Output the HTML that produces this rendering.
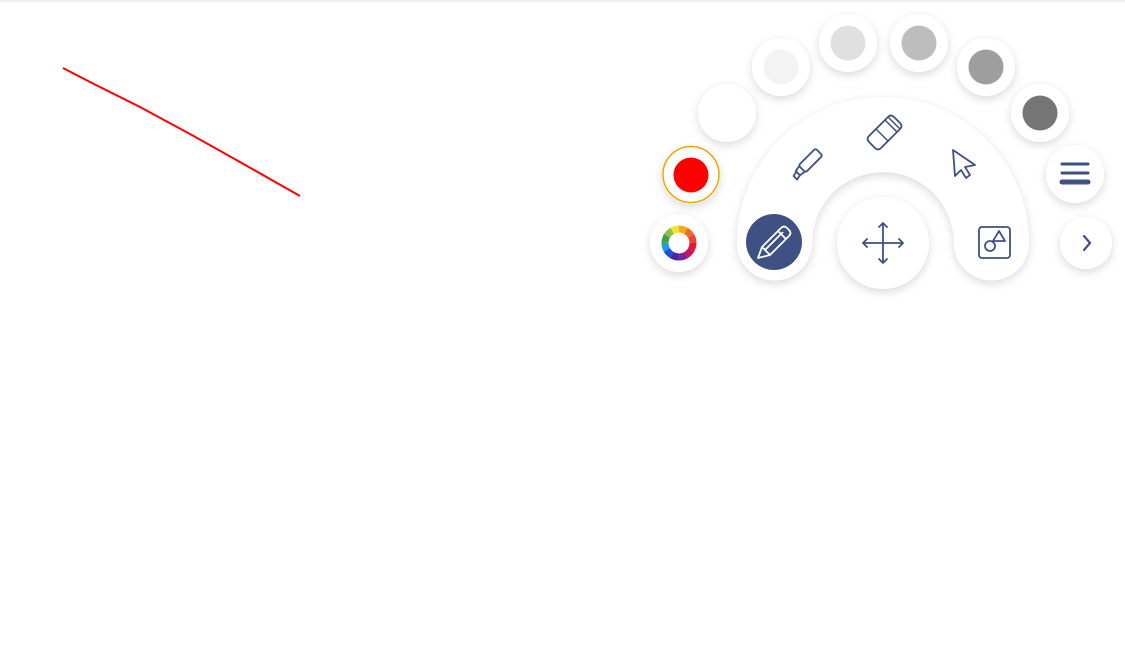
<!DOCTYPE html>
<html><head><style>
html,body{margin:0;padding:0;background:#fff;width:1125px;height:666px;overflow:hidden}
</style></head><body>
<svg width="1125" height="666" viewBox="0 0 1125 666" xmlns="http://www.w3.org/2000/svg">
<defs>
<filter id="sh" x="-50%" y="-50%" width="200%" height="200%">
<feDropShadow dx="0" dy="3" stdDeviation="4.5" flood-color="#000" flood-opacity="0.15"/>
</filter>
</defs>
<rect x="0" y="0" width="1125" height="2" fill="#efefef"/>
<polyline points="63,68 90,82 140,107 190,134 240,162 300,196" fill="none" stroke="#ff0000" stroke-width="2"/>

<path d="M737,243 A146,146 0 0 1 1029,243 A37.5,37.5 0 0 1 954,243 A71,71 0 0 0 812,243 A37.5,37.5 0 0 1 737,243 Z" fill="#fff" filter="url(#sh)"/>
<circle cx="883" cy="243" r="46" fill="#fff" filter="url(#sh)"/>

<g filter="url(#sh)" fill="#fff">
<circle cx="679" cy="243" r="29"/>
<circle cx="691" cy="175" r="29"/>
<circle cx="727" cy="113" r="29"/>
<circle cx="781" cy="67" r="29"/>
<circle cx="848" cy="43" r="29"/>
<circle cx="919" cy="43" r="29"/>
<circle cx="986" cy="67" r="29"/>
<circle cx="1040" cy="113" r="29"/>
<circle cx="1075" cy="174" r="29"/>
<circle cx="1086" cy="243" r="26"/>
</g>
<circle cx="691" cy="174.5" r="28" fill="none" stroke="#f0a500" stroke-width="1.5"/>
<circle cx="691" cy="175" r="17.5" fill="#ff0000"/>
<circle cx="781" cy="67" r="17.5" fill="#f3f3f3"/>
<circle cx="848" cy="43" r="17.5" fill="#e0e0e0"/>
<circle cx="919" cy="43" r="17.5" fill="#bdbdbd"/>
<circle cx="986" cy="67" r="17.5" fill="#9e9e9e"/>
<circle cx="1040" cy="113" r="17.5" fill="#757575"/>

<g transform="rotate(-90 679 243)" fill="none" stroke-width="7">
<circle cx="679" cy="243" r="14" stroke="#f5a623" stroke-dasharray="7.4 80.6" stroke-dashoffset="0"/>
<circle cx="679" cy="243" r="14" stroke="#f26b21" stroke-dasharray="7.4 80.6" stroke-dashoffset="-7.33"/>
<circle cx="679" cy="243" r="14" stroke="#ee4035" stroke-dasharray="7.4 80.6" stroke-dashoffset="-14.66"/>
<circle cx="679" cy="243" r="14" stroke="#e4183c" stroke-dasharray="7.4 80.6" stroke-dashoffset="-21.99"/>
<circle cx="679" cy="243" r="14" stroke="#c2185b" stroke-dasharray="7.4 80.6" stroke-dashoffset="-29.32"/>
<circle cx="679" cy="243" r="14" stroke="#7b1fa2" stroke-dasharray="7.4 80.6" stroke-dashoffset="-36.65"/>
<circle cx="679" cy="243" r="14" stroke="#4527a0" stroke-dasharray="7.4 80.6" stroke-dashoffset="-43.98"/>
<circle cx="679" cy="243" r="14" stroke="#1e4fd8" stroke-dasharray="7.4 80.6" stroke-dashoffset="-51.31"/>
<circle cx="679" cy="243" r="14" stroke="#1e9be9" stroke-dasharray="7.4 80.6" stroke-dashoffset="-58.64"/>
<circle cx="679" cy="243" r="14" stroke="#43a047" stroke-dasharray="7.4 80.6" stroke-dashoffset="-65.97"/>
<circle cx="679" cy="243" r="14" stroke="#8bc34a" stroke-dasharray="7.4 80.6" stroke-dashoffset="-73.3"/>
<circle cx="679" cy="243" r="14" stroke="#f5e12a" stroke-dasharray="7.4 80.6" stroke-dashoffset="-80.63"/>
</g>

<circle cx="774" cy="242" r="28" fill="#3f5183"/>
<g fill="none" stroke="#fff" stroke-width="1.8" stroke-linejoin="round">
<path d="M758,258 L762,247 L781,228 Q784,225 787,228 L789,230 Q792,233 789,236 L770,255 Z"/>
<path d="M778,231 L786,239 M762,247 L770,255 M765,250 L783,232"/>
</g>

<g fill="none" stroke="#3f5183" stroke-width="1.8" stroke-linejoin="round" stroke-linecap="round">
<!-- highlighter -->
<g transform="rotate(-45 807 164)">
<rect x="800" y="159" width="24" height="10" rx="2"/>
<path d="M800,160 L794,161 L794,167 L800,168"/>
<path d="M794,162 L789,163 L789,168 L794,167"/>
</g>
<!-- eraser -->
<path d="M869,136 L888,117 Q891,114 894,117 L900,123 Q903,126 900,129 L881,148 Q878,151 875,148 L869,142 Q866,139 869,136 Z"/>
<path d="M876,129 L888,141 M885,120 L897,132 M889,118 L899,128" stroke-width="1.5"/>
<!-- cursor -->
<path d="M953,150 L975,165 L965,167 L970,175 L966,178 L961,170 L955,176 Z"/>
<!-- move -->
<path d="M883,223 L883,263 M863,243 L903,243 M879,227 L883,223 L887,227 M879,259 L883,263 L887,259 M867,239 L863,243 L867,247 M899,239 L903,243 L899,247"/>
<!-- shapes -->
<rect x="979" y="227" width="31" height="31" rx="3"/>
<circle cx="990" cy="246" r="5"/>
<path d="M993,241 L999,231 L1005,241 Z"/>
<!-- chevron -->
<path d="M1084,236 L1090,243 L1084,250" stroke-width="2.2"/>
</g>
<g stroke="#3f5183" stroke-linecap="round">
<line x1="1062" y1="164" x2="1088" y2="164" stroke-width="3"/>
<line x1="1062" y1="173" x2="1088" y2="173" stroke-width="3"/>
<line x1="1062" y1="182" x2="1088" y2="182" stroke-width="5"/>
</g>
</svg>
</body></html>
